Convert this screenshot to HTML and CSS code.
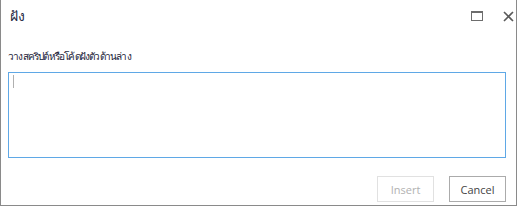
FILE: index.html
```
<!DOCTYPE html>
<html>
<head>
<title>ฝัง</title>
<link rel="stylesheet" href="styles.css">
</head>
<body>
<div class="dialog">
    <div class="dialog-header">
        <div class="dialog-title">ฝัง</div>
        <div class="dialog-controls">
            <span class="ctl-btn" title="Maximize">
                <svg width="12" height="10" viewBox="0 0 12 10">
                    <rect x="0.5" y="0.5" width="11" height="9" fill="none" stroke="#6d6d6d" stroke-width="1"/>
                    <rect x="0" y="0" width="12" height="2" fill="#6d6d6d"/>
                </svg>
            </span>
            <span class="ctl-btn" title="Close">
                <svg width="11" height="11" viewBox="0 0 11 11">
                    <path d="M1 1 L10 10 M10 1 L1 10" stroke="#5a5a5a" stroke-width="1.6"/>
                </svg>
            </span>
        </div>
    </div>

    <!-- embed code -->
    <label class="embed-label" for="embedCode">วางสคริปต์หรือโค้ดฝังตัวด้านล่าง</label>
    <div class="embed-box" id="embedCode"><span class="caret"></span></div>

    <div class="dialog-footer">
        <button class="btn btn-disabled" disabled>Insert</button>
        <button class="btn">Cancel</button>
    </div>
</div>
</body>
</html>
```

FILE: styles.css
```
body {
    margin: 0;
    background-color: white;
    font-family: "Segoe UI", "Open Sans", "Noto Sans", sans-serif;
}
.dialog {
    width: 517px;
    height: 206px;
    box-sizing: border-box;
    border: 1px solid #8a8a8a;
    border-top: none;
    padding: 0 10px 0 7px;
    display: flex;
    flex-direction: column;
}
.dialog-header {
    height: 30px;
    display: flex;
    align-items: center;
    justify-content: space-between;
}
.dialog-title {
    font-size: 14px;
    color: #1f2a44;
    padding-left: 2px;
    padding-top: 1px;
}
.dialog-controls {
    display: flex;
    align-items: center;
    gap: 20px;
    margin-right: -8px;
    padding-top: 2px;
}
.ctl-btn {
    display: flex;
}
.embed-label {
    margin-top: 18px;
    font-size: 10px;
    letter-spacing: -0.8px;
    line-height: 16px;
    color: #1a2238;
}
.embed-box {
    margin-top: 8px;
    height: 86px;
    box-sizing: border-box;
    border: 1px solid #5fa8e6;
    padding: 2px 4px;
}
.caret {
    display: block;
    width: 1px;
    height: 13px;
    background-color: #b0b0b0;
}
.dialog-footer {
    margin-top: 18px;
    display: flex;
    justify-content: flex-end;
    gap: 15px;
}
.btn {
    width: 57px;
    height: 26px;
    padding: 0;
    background-color: white;
    border: 1px solid #ababab;
    color: #444444;
    font-family: "Segoe UI", "Open Sans", "Noto Sans", sans-serif;
    font-size: 11px;
}
.btn-disabled {
    border-color: #e1e1e1;
    color: #b1b1b1;
}
```
